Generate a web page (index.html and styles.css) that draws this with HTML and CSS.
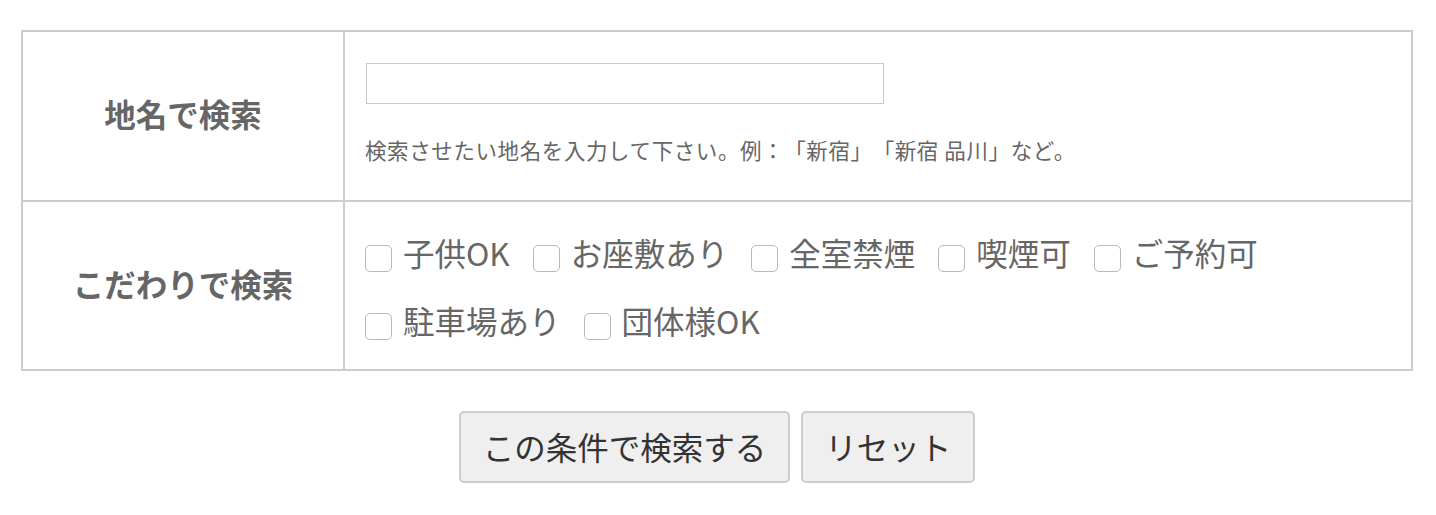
FILE: index.html
```html
<!DOCTYPE html>
<html lang="ja">
<head>
<meta charset="utf-8">
<title>検索</title>
<link rel="stylesheet" href="styles.css">
</head>
<body>
<form class="search">
  <div class="grid">
    <div class="head">地名で検索</div>
    <div class="body body-place">
      <input class="text-input" type="text">
      <p class="help">検索させたい地名を入力して下さい。例：「新宿」「新宿 品川」など。</p>
    </div>
    <div class="head">こだわりで検索</div>
    <div class="body body-checks">
      <label class="check"><input type="checkbox"><span>子供OK</span></label>
      <label class="check"><input type="checkbox"><span>お座敷あり</span></label>
      <label class="check"><input type="checkbox"><span>全室禁煙</span></label>
      <label class="check"><input type="checkbox"><span>喫煙可</span></label>
      <label class="check"><input type="checkbox"><span>ご予約可</span></label>
      <label class="check"><input type="checkbox"><span>駐車場あり</span></label>
      <label class="check"><input type="checkbox"><span>団体様OK</span></label>
    </div>
  </div>
  <div class="actions">
    <button type="button" class="btn">この条件で検索する</button>
    <button type="reset" class="btn">リセット</button>
  </div>
</form>
</body>
</html>
```
FILE: styles.css
```css
* { box-sizing: border-box; }
html, body {
  margin: 0;
  background: #fff;
}
body {
  font-family: "Noto Sans CJK JP", "Noto Sans", sans-serif;
  color: #666;
  text-spacing-trim: space-all;
}
.search {
  padding: 30px 23px 0 21px;
}
.grid {
  display: grid;
  grid-template-columns: 322px 1fr;
  border-top: 2px solid #ccc;
  border-left: 2px solid #ccc;
}
.head, .body {
  border-right: 2px solid #ccc;
  border-bottom: 2px solid #ccc;
}
.head {
  display: flex;
  align-items: center;
  justify-content: center;
  padding-bottom: 6px;
  font-size: 31.5px;
  font-weight: 700;
  color: #666;
}
.body {
  padding-left: 20px;
  padding-right: 20px;
}
.body-place {
  padding-top: 31px;
  padding-bottom: 34px;
}
.text-input {
  display: block;
  width: 518px;
  height: 41px;
  border: 1px solid #c8c8c8;
  margin: 0 0 0 1px;
  padding: 0 8px;
  font: inherit;
  font-size: 20px;
}
.help {
  margin: 30px 0 0;
  font-size: 21.5px;
  line-height: 32px;
  letter-spacing: 0.6px;
  color: #666;
  white-space: nowrap;
  text-spacing-trim: space-all;
}
.body-checks {
  display: flex;
  flex-wrap: wrap;
  padding-top: 16px;
  padding-bottom: 15px;
}
.check {
  display: flex;
  align-items: center;
  height: 68px;
  margin-right: 23px;
  font-size: 31.5px;
  color: #666;
}
.check input {
  appearance: none;
  -webkit-appearance: none;
  flex: none;
  width: 27px;
  height: 27px;
  margin: 12px 11px 0 0;
  border: 1px solid #b8b8b8;
  border-radius: 5px;
  background: #fff;
}
.actions {
  display: flex;
  justify-content: center;
  gap: 11px;
  margin-top: 40px;
}
.btn {
  height: 72px;
  padding: 0 22px 3px;
  border: 2px solid #ccc;
  border-radius: 5px;
  background: #efefef;
  color: #333;
  font-family: inherit;
  font-size: 31.5px;
  line-height: 40px;
}
```
